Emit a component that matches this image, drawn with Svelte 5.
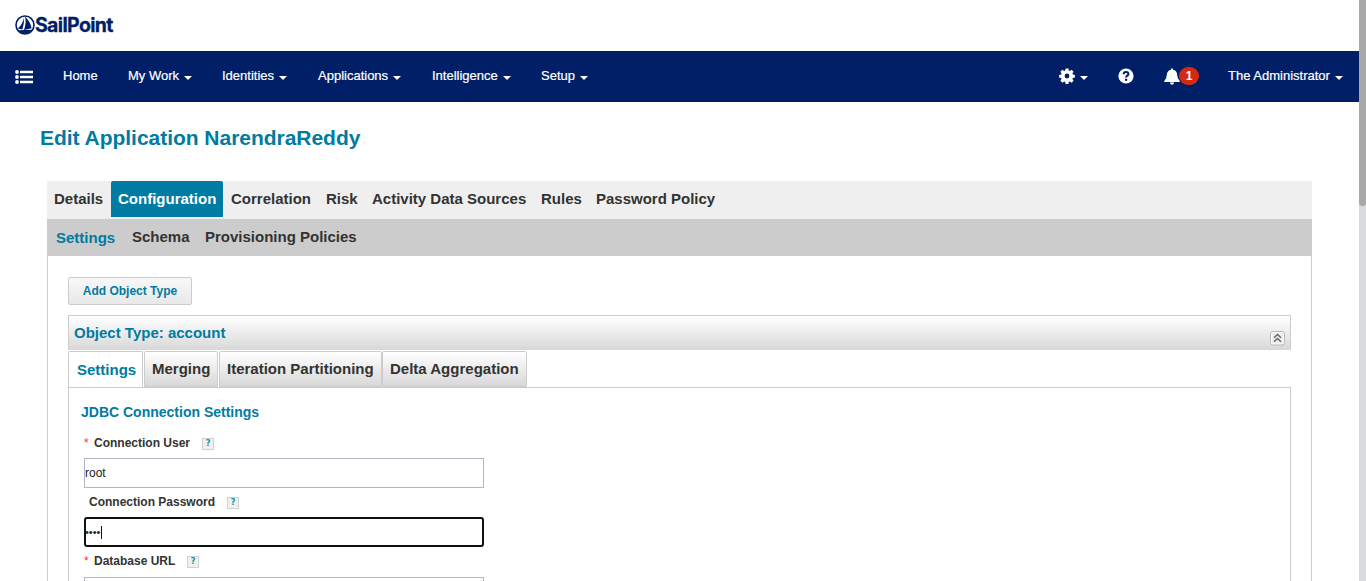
<script>
  const nav = [
    { label: 'Home', width: 65 },
    { label: 'My Work', caret: true, width: 94 },
    { label: 'Identities', caret: true, width: 96 },
    { label: 'Applications', caret: true, width: 114 },
    { label: 'Intelligence', caret: true, width: 109 },
    { label: 'Setup', caret: true, width: 60 }
  ];
  const tabs = [
    { label: 'Details', width: 64 },
    { label: 'Configuration', width: 112, active: true },
    { label: 'Correlation', width: 95 },
    { label: 'Risk', width: 46 },
    { label: 'Activity Data Sources', width: 169 },
    { label: 'Rules', width: 55 },
    { label: 'Password Policy', width: 140 }
  ];
  const subTabs = [
    { label: 'Settings', width: 76, active: true },
    { label: 'Schema', width: 73 },
    { label: 'Provisioning Policies', width: 170 }
  ];
  const innerTabs = [
    { label: 'Settings', width: 75, gap: 1, active: true },
    { label: 'Merging', width: 74, gap: 1 },
    { label: 'Iteration Partitioning', width: 163, gap: 0 },
    { label: 'Delta Aggregation', width: 145, gap: 0 }
  ];
  const fields = [
    { label: 'Connection User', required: true, value: 'root', width: 108 },
    { label: 'Connection Password', value: '••••', width: 138, focused: true },
    { label: 'Database URL', required: true, value: '', width: 93 }
  ];
</script>

<div class="screen">
  <div class="page">
    <header class="brand">
      <svg class="mark" width="20" height="20" viewBox="0 0 20 20">
        <circle cx="10" cy="10" r="9" fill="none" stroke="#001f66" stroke-width="1.6" />
        <path d="M8.900 2.300Q8.200 9 2.800 13.500L7.400 14.500Q9.600 8 8.900 2.300Z M10 1.600Q15.800 7.500 16.600 13.200L9 15Q11.600 8 10 1.600Z M3 15.300L16.800 14.700Q14.400 18.300 10.600 18.600Q6 18.600 3 15.300Z" fill="#001f66" />
      </svg>
      <span class="wordmark">SailPoint</span>
    </header>

    <nav class="navbar">
      <svg class="list" width="18" height="14" viewBox="0 0 18 14" fill="#fff">
        <circle cx="2" cy="2" r="1.9" /><circle cx="2" cy="7" r="1.9" /><circle cx="2" cy="12" r="1.9" />
        <path d="M5 .8h13v2.400H5z M5 5.800h13v2.400H5z M5 10.800h13v2.400H5z" />
      </svg>
      {#each nav as item}
        <div class="nav-item" style:width="{item.width}px">
          <span>{item.label}</span>{#if item.caret}<i class="caret"></i>{/if}
        </div>
      {/each}
      <div class="tools">
        <div class="gear">
          <svg width="16" height="16" viewBox="0 0 16 16" fill="#fff">
            <path fill-rule="evenodd" d="M6.600 .5h2.800l.4 2 1.100.5 1.700-1.200 2 2-1.200 1.700.5 1.100 2 .4v2.400l-2 .5-.5 1.100 1.200 1.700-2 2-1.700-1.200-1.100.5-.4 2H6.600l-.4-2-1.100-.5-1.700 1.200-2-2L2.600 11l-.5-1.100-2-.5V7l2-.4.5-1.100L1.400 3.800l2-2L5.100 3l1.100-.5z M8 5.600a2.400 2.400 0 1 0 0 4.800a2.400 2.400 0 1 0 0-4.800z" />
          </svg>
          <i class="caret"></i>
        </div>
        <div class="help">
          <svg width="16" height="16" viewBox="0 0 16 16">
            <circle cx="8" cy="8" r="7.600" fill="#fff" />
            <path d="M5.600 6.300C5.700 3.200 10.600 3.300 10.400 6.100C10.300 7.700 8.100 7.600 8.100 9.500" fill="none" stroke="#001f66" stroke-width="2" />
            <path d="M7 10.700h2.200v2.100H7z" fill="#001f66" />
          </svg>
        </div>
        <div class="bell">
          <svg width="16" height="17" viewBox="0 0 16 17" fill="#fff">
            <path d="M7.100 .4h1.800v1.300Q13 2.400 13.200 7Q13.300 10.500 15.800 13.200V14H.2v-.8Q2.700 10.500 2.800 7Q3 2.400 7.100 1.700z M5.800 14.600h4.400Q10 16.700 8 16.700Q6 16.700 5.800 14.600z" />
          </svg>
          <b>1</b>
        </div>
        <div class="user"><span>The Administrator</span><i class="caret"></i></div>
      </div>
    </nav>

    <main>
      <h1>Edit Application NarendraReddy</h1>
      <div class="tabs">
        {#each tabs as tab}
          <div class="tab" class:active={tab.active} style:width="{tab.width}px">{tab.label}</div>
        {/each}
      </div>
      <div class="sub-tabs">
        {#each subTabs as tab}
          <div class="sub" class:active={tab.active} style:width="{tab.width}px">{tab.label}</div>
        {/each}
      </div>
      <section class="body">
        <button>Add Object Type</button>
        <div class="object-head">
          <span>Object Type: account</span>
          <svg width="15" height="15" viewBox="0 0 15 15">
            <rect x=".5" y=".5" width="14" height="13.500" rx="2.500" fill="#fff" stroke="#b5b5b5" />
            <rect x="2" y="2" width="11" height="10.500" fill="#eee" />
            <path d="M4 6.800L7.500 3.500l3.500 3.300M4 10.800L7.500 7.500l3.500 3.300" fill="none" stroke="#666" stroke-width="1.500" />
          </svg>
        </div>
        <div class="inner-tabs">
          {#each innerTabs as tab}
            <div class="inner" class:active={tab.active} style:width="{tab.width}px" style:margin-right="{tab.gap}px">{tab.label}</div>
          {/each}
        </div>
        <div class="settings">
          <h2>JDBC Connection Settings</h2>
          {#each fields as field}
            <div class="field">
              <div class="label">
                <em>{field.required ? '*' : ''}</em>
                <span class:plain={!field.required} style:width="{field.width}px">{field.label}</span>
                <i class="hint">?</i>
              </div>
              <div class="input" class:focused={field.focused}>
                <span>{field.value}</span>{#if field.focused}<i class="cursor"></i>{/if}
              </div>
            </div>
          {/each}
        </div>
      </section>
    </main>
  </div>
  <div class="scrollbar"><div class="thumb"></div></div>
</div>

<style>
  :global(body) { margin: 0; overflow: hidden; }
  * { box-sizing: border-box; }
  .screen { display: flex; width: 1366px; height: 581px; overflow: hidden; background: #fff; font-family: "Liberation Sans", Arial, sans-serif; color: #333; white-space: nowrap; }
  .page { width: 1359px; height: 581px; overflow: hidden; }
  .scrollbar { width: 7px; height: 581px; background: #dadbdf; }
  .thumb { height: 206px; background: #a8a8a8; border-radius: 0 0 3px 3px; }
  .brand { height: 51px; display: flex; padding: 15px 0 0 15px; }
  .wordmark { font: 700 19.500px/21px Inter, sans-serif; letter-spacing: -.65px; color: #001f66; -webkit-text-stroke: .3px #001f66; }
  .navbar { height: 51px; display: flex; align-items: center; background: #001f66; color: #fff; font-size: 13px; padding-left: 15px; border-bottom: 1px solid #001a59; }
  .list { margin-right: 30px; margin-top: 2px; }
  .nav-item { display: flex; align-items: center; flex: none; padding-bottom: 1px; }
  .nav-item span, .user span { -webkit-text-stroke: .2px #fff; }
  .caret { width: 0; height: 0; border: 4px solid transparent; border-top-color: #fff; border-bottom: 0; margin: 4px 0 0 5px; }
  .tools { margin-left: auto; display: flex; align-items: center; }
  .gear { display: flex; align-items: center; width: 59px; }
  .help { display: flex; width: 46px; }
  .bell { display: flex; align-items: center; width: 64px; }
  .bell b { width: 20px; height: 18px; margin-left: -1px; border-radius: 10px; background: #d42a12; font-size: 12px; line-height: 18px; text-align: center; }
  .user { display: flex; align-items: center; width: 131px; padding-bottom: 1px; }
  main { padding: 24px 47px 0; }
  h1 { margin: 0 0 0 -7px; height: 55px; font-size: 21px; line-height: 24px; letter-spacing: -.03px; color: #007ba1; }
  .tabs { display: flex; height: 38px; background: #efefef; font-size: 15px; font-weight: bold; line-height: 36px; }
  .tab { height: 36px; padding-left: 7px; flex: none; }
  .tab:nth-child(n+3) { padding-left: 8px; }
  .tab.active { background: #007ba1; color: #fff; border-radius: 2px 2px 0 0; }
  .sub-tabs { display: flex; height: 37px; background: #ccc; font-size: 15px; font-weight: bold; line-height: 36px; padding-left: 9px; }
  .sub.active, .inner.active { color: #007ba1; padding-top: 1px; }
  .body { height: 500px; border: solid #ccc; border-width: 0 1px; padding: 21px 20px 0; }
  button { display: block; width: 124px; height: 28px; padding: 0; border: 1px solid #ccc; border-radius: 2px; background: linear-gradient(#f8f8f8, #e8e8e8); color: #007ba1; font: bold 12px/26px "Liberation Sans", sans-serif; }
  .object-head { height: 35px; margin-top: 10px; border: solid #ccc; border-width: 1px 1px 0; background: linear-gradient(#fff, #d8d8d8); display: flex; justify-content: space-between; padding: 0 5px; font-size: 15px; font-weight: bold; line-height: 34px; color: #007ba1; }
  .object-head svg { margin-top: 15px; }
  .inner-tabs { display: flex; height: 37px; padding-top: 1px; font-size: 15px; font-weight: bold; line-height: 34px; }
  .inner { height: 36px; flex: none; border: 1px solid #ccc; border-radius: 2px 2px 0 0; background: linear-gradient(#fff, #d8d8d8); padding-left: 7px; }
  .inner.active { background: #fff; padding-left: 8px; border-bottom: 0; }
  .settings { height: 300px; border: 1px solid #ccc; padding: 15px 0 0 12px; }
  h2 { margin: 0; height: 30px; font-size: 14px; line-height: 18px; color: #007ba1; }
  .field { height: 59px; padding-left: 3px; }
  .label { display: flex; height: 25px; font-size: 12px; font-weight: bold; line-height: 20px; }
  .field:last-child .label { height: 26px; }
  .label em { color: #f33; font-style: normal; font-weight: normal; width: 10px; }
  .plain { margin-left: -5px; }
  .hint { width: 12px; height: 12px; margin-top: 5px; border: 1px solid #d0d0d0; background: #f0f0f0; color: #0698ae; font: bold 8px/10px "DejaVu Sans", sans-serif; text-align: center; }
  .input { width: 400px; height: 30px; border: 1px solid #b4b4c8; color: #222; font-size: 12px; line-height: 28px; display: flex; align-items: center; }
  .input.focused { border: 2px solid #111; border-radius: 3px; font-size: 11px; line-height: 26px; }
  .focused span { margin-left: -1px; }
  .cursor { width: 1px; height: 13px; margin-left: 1px; background: #111; }
</style>
